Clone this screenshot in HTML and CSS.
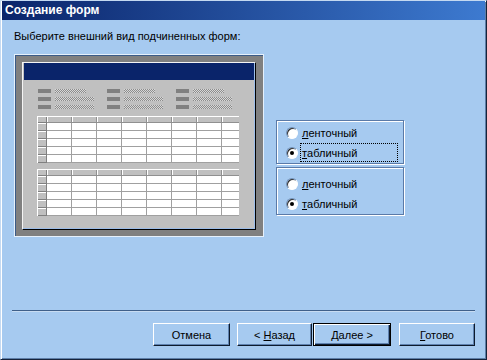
FILE: index.html
```html
<!DOCTYPE html>
<html lang="ru">
<head>
    <meta charset="UTF-8">
    <title>Создание форм</title>
    <link rel="stylesheet" href="styles.css">
</head>
<body>
    <div class="window">
        <div class="titlebar">Создание форм</div>
        <div class="content">
            <p class="prompt">Выберите внешний вид подчиненных форм:</p>
            <div class="main">
                <div class="preview">
                    <div class="panel">
                        <div class="form-header"></div>
                        <div class="fields">
                            <div class="field-col">
                                <div class="field short"><span class="label"></span><span class="value"></span></div>
                                <div class="field"><span class="label"></span><span class="value"></span></div>
                                <div class="field"><span class="label"></span><span class="value"></span></div>
                            </div>
                            <div class="field-col">
                                <div class="field short"><span class="label"></span><span class="value"></span></div>
                                <div class="field"><span class="label"></span><span class="value"></span></div>
                                <div class="field"><span class="label"></span><span class="value"></span></div>
                            </div>
                            <div class="field-col">
                                <div class="field short"><span class="label"></span><span class="value"></span></div>
                                <div class="field"><span class="label"></span><span class="value"></span></div>
                                <div class="field"><span class="label"></span><span class="value"></span></div>
                            </div>
                        </div>
                        <div class="mini-table">
                            <div class="corner"></div>
                            <div class="col-heads"></div>
                            <div class="row-heads"></div>
                            <div class="cells"></div>
                        </div>
                        <div class="mini-table second">
                            <div class="corner"></div>
                            <div class="col-heads"></div>
                            <div class="row-heads"></div>
                            <div class="cells"></div>
                        </div>
                    </div>
                </div>

                <div class="options">
                    <div class="group first">
                        <div class="option">
                            <span class="radio"></span>
                            <span class="option-text"><u>л</u>енточный</span>
                        </div>
                        <div class="option">
                            <span class="radio checked"></span>
                            <span class="option-text focused"><u>т</u>абличный</span>
                        </div>
                    </div>
                    <div class="group">
                        <div class="option">
                            <span class="radio"></span>
                            <span class="option-text"><u>л</u>енточный</span>
                        </div>
                        <div class="option">
                            <span class="radio checked"></span>
                            <span class="option-text"><u>т</u>абличный</span>
                        </div>
                    </div>
                </div>
            </div>
        </div>

        <div class="footer">
            <div class="separator"></div>
            <div class="buttons">
                <button class="btn cancel">Отмена</button>
                <div class="nav">
                    <button class="btn back">&lt; <u>Н</u>азад</button>
                    <button class="btn next default"><u>Д</u>алее &gt;</button>
                </div>
                <button class="btn finish"><u>Г</u>отово</button>
            </div>
        </div>
    </div>
</body>
</html>
```

FILE: styles.css
```css
body {
    margin: 0;
    font-family: "Liberation Sans", Arial, sans-serif;
    font-size: 11px;
    color: #000;
}
.window {
    width: 487px;
    height: 360px;
    box-sizing: border-box;
    display: flex;
    flex-direction: column;
    background-color: #a6caf0;
    border: 1px solid;
    border-color: #c4d9f1 #16233a #16233a #c4d9f1;
    box-shadow: inset 1px 1px 0 #ffffff, inset -1px -1px 0 #5d7ea8;
    padding: 0 1px 1px 1px;
}
.titlebar {
    height: 19px;
    line-height: 19px;
    padding-left: 3px;
    background: linear-gradient(to right, #0a246a, #3d7ad0);
    color: #fff;
    font-weight: bold;
    font-size: 12px;
}
.content {
    padding-left: 12px;
}
.prompt {
    margin: 10px 0 0 0;
    line-height: 13px;
}
.main {
    display: flex;
    margin-top: 11px;
}

/* preview of the form */
.preview {
    width: 250px;
    height: 183px;
    box-sizing: border-box;
    border: 1px solid #e6f0fa;
    box-shadow: inset 1px 1px 0 #3b5b88;
    background-color: #808080;
    padding: 7px 7px 6px 7px;
}
.panel {
    height: 168px;
    box-sizing: border-box;
    border: 1px solid;
    border-color: #f4f4f4 #000 #000 #f4f4f4;
    box-shadow: inset -1px -1px 0 #9dbde8;
    background-color: #c0c0c0;
    padding: 0 1px;
}
.form-header {
    height: 17px;
    background-color: #0a246a;
}
.fields {
    display: flex;
    gap: 13px;
    margin: 9px 0 0 14px;
}
.field-col {
    display: flex;
    flex-direction: column;
    gap: 4px;
    width: 56px;
}
.field {
    display: flex;
    gap: 4px;
    height: 4px;
}
.field .label {
    width: 13px;
    background-color: #808080;
}
.field .value {
    width: 39px;
    background: repeating-conic-gradient(#8c8c8c 0 25%, #d8d8d8 0 50%) 0 0 / 2px 2px;
}
.field.short .value {
    width: 31px;
}
.mini-table {
    display: grid;
    grid-template-columns: 10px 192px;
    grid-template-rows: 7px 40px;
    margin: 7px 0 0 13px;
}
.mini-table.second {
    margin-top: 6px;
}
.corner {
    background-color: #c0c0c0;
    box-shadow: inset 1px 1px 0 #fff, inset -1px -1px 0 #808080;
}
.col-heads {
    background: repeating-linear-gradient(to right, #fff 0 1px, #c0c0c0 1px 24px, #909090 24px 25px);
    box-shadow: inset 0 1px 0 #fff, inset 0 -1px 0 #909090;
}
.row-heads {
    background: repeating-linear-gradient(to bottom, #fff 0 1px, #c0c0c0 1px 7px, #808080 7px 8px);
    box-shadow: inset 1px 0 0 #fff, inset -1px 0 0 #808080;
}
.cells {
    background-color: #fff;
    background-image:
        linear-gradient(to right, transparent 24px, #a0a0a0 24px),
        linear-gradient(to bottom, transparent 7px, #a0a0a0 7px);
    background-size: 25px 8px, 100% 8px;
}

/* layout options */
.options {
    margin: 66px 0 0 12px;
    display: flex;
    flex-direction: column;
    gap: 3px;
}
.group {
    width: 128px;
    box-sizing: border-box;
    border: 1px solid #5a7aa8;
    box-shadow: inset 1px 1px 0 #fff, 1px 1px 0 #fff;
    padding: 2px 5px 1px 9px;
}
.group + .group {
    padding-top: 6px;
}
.option {
    display: flex;
    align-items: center;
    height: 19px;
}
.option + .option {
    margin-top: 1px;
}
.radio {
    position: relative;
    width: 12px;
    height: 12px;
    box-sizing: border-box;
    border-radius: 50%;
    background-color: #fff;
    border: 1px solid;
    border-color: #6e8fb8 #fff #fff #6e8fb8;
    box-shadow: inset 1px 1px 0 #303030;
}
.radio.checked::after {
    content: "";
    position: absolute;
    left: 3px;
    top: 3px;
    width: 4px;
    height: 4px;
    border-radius: 50%;
    background-color: #000;
}
.option-text {
    flex: 1;
    align-self: stretch;
    display: flex;
    align-items: center;
    margin-left: 2px;
    padding-left: 1px;
    border: 1px solid transparent;
}
.option-text.focused {
    border: 1px dotted #000;
}

/* bottom buttons */
.footer {
    margin-top: auto;
    padding-bottom: 12px;
}
.separator {
    margin: 0 10px 0 10px;
    border-top: 1px solid #3f608a;
    border-bottom: 1px solid #c8dcf2;
}
.buttons {
    display: flex;
    justify-content: flex-end;
    gap: 7px;
    margin-top: 11px;
    padding-right: 10px;
}
.nav {
    display: flex;
    gap: 1px;
}
.btn {
    height: 23px;
    width: 76px;
    padding: 0;
    box-sizing: border-box;
    font-family: "Liberation Sans", Arial, sans-serif;
    font-size: 11px;
    color: #000;
    background-color: #a6caf0;
    border: 1px solid;
    border-color: #fff #0d1b2e #0d1b2e #fff;
    box-shadow: inset -1px -1px 0 #5f82b0;
}
.btn.cancel {
    width: 77px;
}
.btn.back {
    width: 75px;
}
.btn.next {
    width: 78px;
}
.btn.finish {
    margin-left: 1px;
}
.btn.default {
    border-color: #000;
    box-shadow: inset 1px 1px 0 #fff, inset -1px -1px 0 #0d1b2e, inset -2px -2px 0 #5f82b0;
}
```
